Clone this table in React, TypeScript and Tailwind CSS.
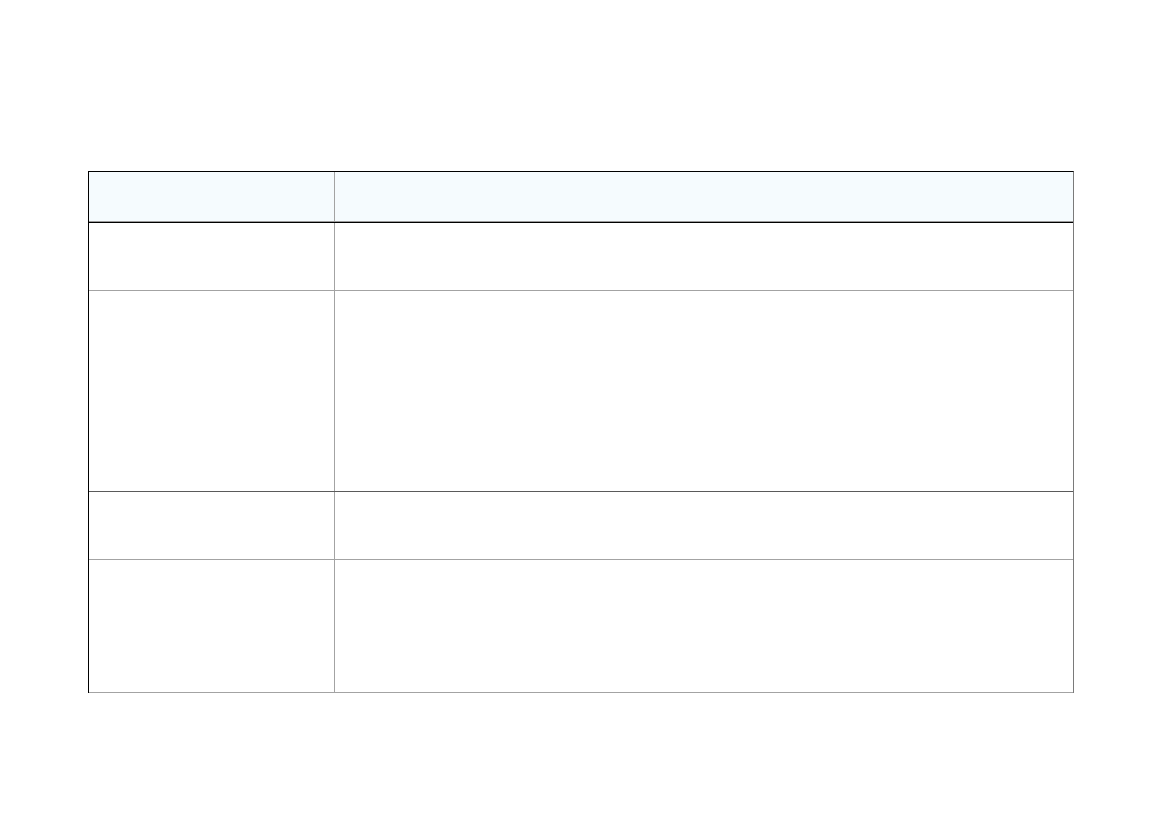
const rows = [
  { h: "h-[68px]", border: "border-[#a3a3a3]" },
  { h: "h-[201px]", border: "border-[#5a5a5a]" },
  { h: "h-[68px]", border: "border-[#a3a3a3]" },
  { h: "h-[133px]", border: "border-[#a3a3a3]" },
];

export default function App() {
  return (
    <div className="w-[1169px] h-[827px] bg-white pt-[171px] pl-[88px]">
      <div className="w-[986px] border-t border-l border-t-black border-l-black border-r border-r-[#7a7a7a]">
        {/* header */}
        <div className="flex h-[50px] bg-[#f5fbfe] border-b border-b-[#9a9a9a]">
          <div className="w-[246px] border-r border-r-[#a3a3a3]" />
          <div className="flex-1" />
        </div>
        <div className="h-px bg-black" />
        {rows.map((r, i) => (
          <div key={i} className={`flex ${r.h} border-b ${r.border}`}>
            <div className="w-[246px] border-r border-r-[#a3a3a3]" />
            <div className="flex-1" />
          </div>
        ))}
      </div>
    </div>
  );
}
